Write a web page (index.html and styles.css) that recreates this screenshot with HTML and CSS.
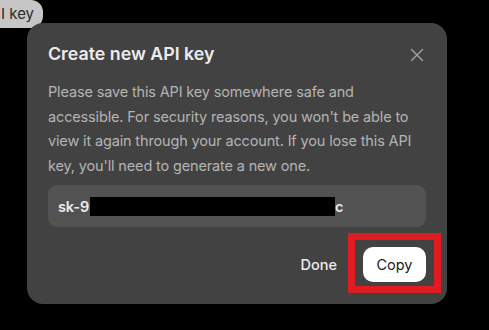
FILE: index.html
```html
<html><head>
<link rel="stylesheet" href="styles.css">
</head>
<body>
<div class="page">
    <span class="chip">I key</span>
</div>

<div class="modal">
    <div class="modal-header">
        <h2 class="title">Create new API key</h2>
        <svg class="close-icon" viewBox="0 0 14 14" fill="none" stroke="#a3a3a3" stroke-width="1.4" stroke-linecap="round">
            <path d="M1.5 1.5L12.5 12.5"></path>
            <path d="M12.5 1.5L1.5 12.5"></path>
        </svg>
    </div>
    <p class="description">Please save this API key somewhere safe and accessible. For security reasons, you won't be able to view it again through your account. If you lose this API key, you'll need to generate a new one.</p>
    <div class="key-box">
        <span class="key-text">sk-9</span><span class="redacted"></span><span class="key-text">c</span>
    </div>
    <div class="actions">
        <button class="btn-done">Done</button>
        <span class="highlight">
            <button class="btn-copy">Copy</button>
        </span>
    </div>
</div>
</body>
</html>
```

FILE: styles.css
```css
:root {
    --bg-page: #000000;
    --bg-modal: #424242;
    --bg-key: #525252;
    --text-primary: #ececec;
    --text-secondary: #b4b4b4;
    --annotation: #e01b22;
}

body {
    margin: 0;
    background: var(--bg-page);
    font-family: Inter, "Noto Sans", sans-serif;
    height: 330px;
    overflow: hidden;
}

.page {
    display: flex;
}

.chip {
    display: block;
    height: 28px;
    width: 43px;
    box-sizing: border-box;
    padding-left: 1px;
    line-height: 27px;
    font-size: 15px;
    color: #2b2b2b;
    background: #c6c6c6;
    border-radius: 0 12px 12px 0;
}

.modal {
    position: absolute;
    left: 27px;
    top: 23px;
    width: 420px;
    height: 281px;
    box-sizing: border-box;
    padding: 19px 21px 10px;
    background: var(--bg-modal);
    border-radius: 16px;
}

.modal-header {
    display: flex;
    align-items: center;
    justify-content: space-between;
}

.title {
    margin: 0;
    font-size: 17.8px;
    font-weight: 600;
    line-height: 24px;
    color: var(--text-primary);
}

.close-icon {
    width: 14px;
    height: 14px;
    margin-right: 2px;
    margin-top: 1px;
}

.description {
    margin: 14px 0 0;
    font-size: 14.5px;
    letter-spacing: -0.15px;
    line-height: 24.6px;
    color: var(--text-secondary);
}

.key-box {
    display: flex;
    align-items: center;
    height: 42px;
    margin-top: 7px;
    padding: 0 10px;
    background: var(--bg-key);
    border-radius: 9px;
}

.key-text {
    font-size: 14.5px;
    font-weight: 600;
    letter-spacing: -0.1px;
    color: var(--text-primary);
}

.redacted {
    display: block;
    width: 245px;
    height: 19px;
    margin-left: 1px;
    margin-top: 1px;
    background: #000;
}

.actions {
    display: flex;
    justify-content: flex-end;
    align-items: center;
    margin-top: 6px;
    margin-right: -15px;
}

button {
    font-family: inherit;
    font-size: 14.5px;
    border: none;
    cursor: pointer;
}

.btn-done {
    background: none;
    color: var(--text-primary);
    font-weight: 500;
    padding: 0;
    margin-right: 11px;
    margin-top: 3px;
}

.highlight {
    display: block;
    padding: 7px 8px 4px;
    border: 7px solid var(--annotation);
}

.btn-copy {
    display: block;
    width: 63px;
    height: 35px;
    padding: 0;
    background: #ffffff;
    color: #202020;
    border-radius: 10px;
}
```
